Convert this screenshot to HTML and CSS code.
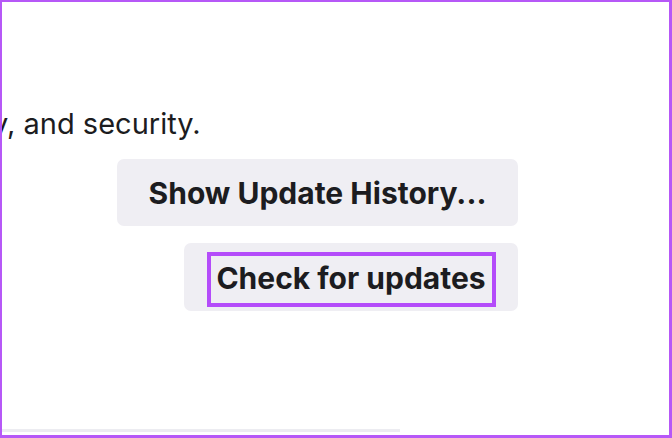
FILE: index.html
```html
<!DOCTYPE html>
<html>
<head>
<meta charset="utf-8">
<link rel="stylesheet" href="styles.css">
</head>
<body>
<div class="frame">
  <p class="desc">y, and security.</p>
  <div class="actions">
    <div class="btn btn-history">Show Update History...</div>
    <div class="btn btn-check"><span class="hl">Check for updates</span></div>
  </div>
  <div class="rule"></div>
</div>
</body>
</html>
```
FILE: styles.css
```css
html, body {
  margin: 0;
  padding: 0;
  background: #ffffff;
}
.frame {
  box-sizing: border-box;
  width: 672px;
  height: 438px;
  border-style: solid;
  border-color: #b658f7;
  border-width: 2px 3px 3px 2px;
  overflow: hidden;
  display: flex;
  flex-direction: column;
  font-family: Inter, "Noto Sans", sans-serif;
  color: #1c1c20;
}
.desc {
  margin: 105px 0 0 -10px;
  font-size: 29px;
  line-height: 34px;
  font-weight: 400;
  white-space: nowrap;
}
.actions {
  display: flex;
  flex-direction: column;
  align-items: flex-end;
  gap: 17px;
  margin: 18px 151px 0 0;
}
.btn {
  box-sizing: border-box;
  background: #efeef3;
  border-radius: 7px;
  font-weight: 700;
  font-size: 30px;
  display: flex;
  align-items: center;
  justify-content: center;
  white-space: nowrap;
}
.btn-history {
  width: 401px;
  height: 67px;
}
.btn-check {
  width: 334px;
  height: 68px;
  padding-top: 5px;
}
.hl {
  box-sizing: border-box;
  width: 289px;
  height: 55px;
  padding-bottom: 4px;
  border: 4px solid #b44cfa;
  display: flex;
  align-items: center;
  justify-content: center;
}
.rule {
  margin-top: auto;
  margin-bottom: 3px;
  width: 398px;
  height: 3px;
  background: #ececf1;
}
```
